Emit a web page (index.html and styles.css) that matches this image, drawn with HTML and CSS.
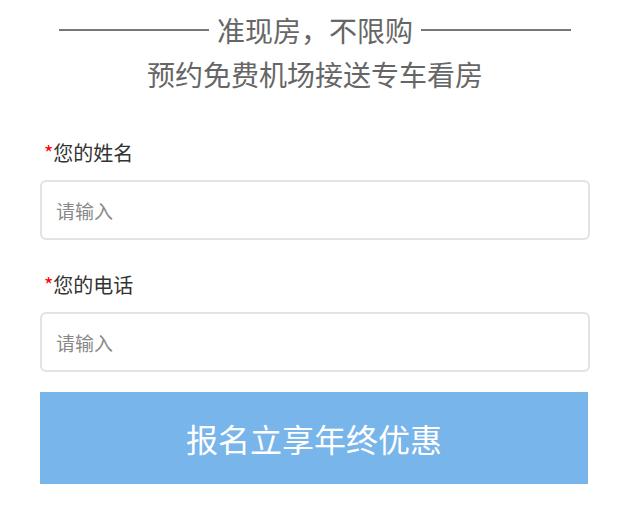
FILE: index.html
```html
<!DOCTYPE html>
<html>
<head>
  <meta charset="utf-8">
  <title>准现房，不限购</title>
  <link rel="stylesheet" href="styles.css">
</head>

<body>
  <div class="container">
    <div class="heading">
      <h1 class="title">准现房，不限购</h1>
      <p class="subtitle">预约免费机场接送专车看房</p>
    </div>

    <form class="signup-form">
      <div class="form-group">
        <label for="name"><span class="required">*</span>您的姓名</label>
        <input type="text" id="name" name="name" placeholder="请输入">
      </div>
      <div class="form-group last">
        <label for="phone"><span class="required">*</span>您的电话</label>
        <input type="text" id="phone" name="phone" placeholder="请输入">
      </div>
      <div class="submit-button">
        <button type="submit">报名立享年终优惠</button>
      </div>
    </form>
  </div>
</body>

</html>
```

FILE: styles.css
```css
body {
  font-family: "Noto Sans CJK SC", "Noto Sans", sans-serif;
  background-color: #fff;
  margin: 0;
}

.container {
  width: 550px;
  padding: 8px 44px 0 40px;
}

.heading {
  text-align: center;
  color: #666;
}

.title {
  display: flex;
  align-items: center;
  justify-content: center;
  gap: 8px;
  margin: 0;
  font-size: 28px;
  font-weight: normal;
  line-height: 44px;
}

.title::before,
.title::after {
  content: "";
  width: 150px;
  height: 2px;
  background-color: #777;
}

.subtitle {
  margin: 0;
  font-size: 28px;
  line-height: 44px;
}

.signup-form {
  margin-top: 42px;
}

.form-group {
  margin-bottom: 30px;
}

.form-group.last {
  margin-bottom: 20px;
}

.form-group label {
  display: block;
  font-size: 20px;
  line-height: 30px;
  color: #333;
  padding-left: 4px;
  margin-bottom: 12px;
}

.required {
  color: #f00;
}

.form-group input[type="text"] {
  box-sizing: border-box;
  width: 100%;
  height: 60px;
  padding: 0 14px;
  border: 2px solid #e3e3e3;
  border-radius: 6px;
  font-family: inherit;
  font-size: 19px;
  color: #333;
  outline: none;
}

.form-group input::placeholder {
  color: #888;
}

.submit-button button {
  display: block;
  width: 548px;
  height: 92px;
  background-color: #78b5ea;
  color: #fff;
  border: none;
  font-family: inherit;
  font-size: 32px;
  cursor: pointer;
}
```
